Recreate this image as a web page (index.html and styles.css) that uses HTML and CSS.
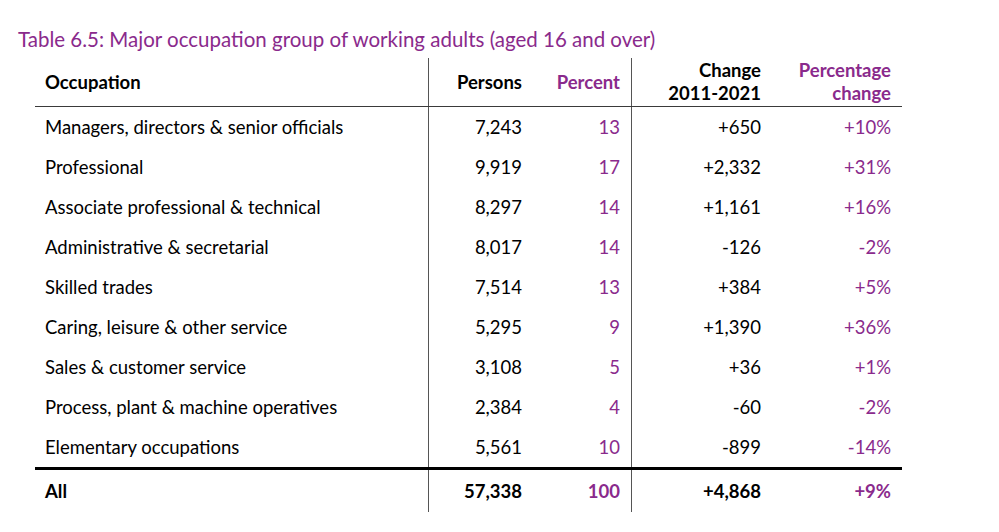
FILE: index.html
```html
<!DOCTYPE html>
<html lang="en">
<head>
<meta charset="utf-8">
<title>Table 6.5</title>
<link rel="stylesheet" href="styles.css">
</head>
<body>
<h1 class="title">Table 6.5: Major occupation group of working adults (aged 16 and over)</h1>
<table class="data">
  <thead>
    <tr>
      <th class="occ">Occupation</th>
      <th class="num persons">Persons</th>
      <th class="num pct purple">Percent</th>
      <th class="num chg">Change<br>2011-2021</th>
      <th class="num pchg purple">Percentage<br>change</th>
    </tr>
  </thead>
  <tbody>
    <tr><td class="occ">Managers, directors &amp; senior officials</td><td class="num persons">7,243</td><td class="num pct purple">13</td><td class="num chg">+650</td><td class="num pchg purple">+10%</td></tr>
    <tr><td class="occ">Professional</td><td class="num persons">9,919</td><td class="num pct purple">17</td><td class="num chg">+2,332</td><td class="num pchg purple">+31%</td></tr>
    <tr><td class="occ">Associate professional &amp; technical</td><td class="num persons">8,297</td><td class="num pct purple">14</td><td class="num chg">+1,161</td><td class="num pchg purple">+16%</td></tr>
    <tr><td class="occ">Administrative &amp; secretarial</td><td class="num persons">8,017</td><td class="num pct purple">14</td><td class="num chg">-126</td><td class="num pchg purple">-2%</td></tr>
    <tr><td class="occ">Skilled trades</td><td class="num persons">7,514</td><td class="num pct purple">13</td><td class="num chg">+384</td><td class="num pchg purple">+5%</td></tr>
    <tr><td class="occ">Caring, leisure &amp; other service</td><td class="num persons">5,295</td><td class="num pct purple">9</td><td class="num chg">+1,390</td><td class="num pchg purple">+36%</td></tr>
    <tr><td class="occ">Sales &amp; customer service</td><td class="num persons">3,108</td><td class="num pct purple">5</td><td class="num chg">+36</td><td class="num pchg purple">+1%</td></tr>
    <tr><td class="occ">Process, plant &amp; machine operatives</td><td class="num persons">2,384</td><td class="num pct purple">4</td><td class="num chg">-60</td><td class="num pchg purple">-2%</td></tr>
    <tr><td class="occ">Elementary occupations</td><td class="num persons">5,561</td><td class="num pct purple">10</td><td class="num chg">-899</td><td class="num pchg purple">-14%</td></tr>
  </tbody>
  <tfoot>
    <tr><td class="occ">All</td><td class="num persons">57,338</td><td class="num pct purple">100</td><td class="num chg">+4,868</td><td class="num pchg purple">+9%</td></tr>
  </tfoot>
</table>
</body>
</html>
```
FILE: styles.css
```css
html, body {
  margin: 0;
  padding: 0;
  background: #ffffff;
  color: #000000;
  font-family: Lato, "Open Sans", sans-serif;
}
body {
  padding: 26px 0 0 18px;
}
.title {
  margin: 0;
  font-size: 20.5px;
  font-weight: 400;
  line-height: 26px;
  color: #8a2a8c;
}
.data {
  margin: 6px 0 0 17px;
  border-collapse: collapse;
  font-size: 18.5px;
}
.data th, .data td {
  padding: 0;
  vertical-align: middle;
}
.data th {
  font-weight: 700;
  height: 48px;
  line-height: 23px;
  border-bottom: 1px solid #3a3a3a;
}
.data tbody td {
  height: 40px;
}
.data tbody tr:last-child td {
  border-bottom: 3px solid #000000;
}
.data tfoot td {
  height: 42px;
  font-weight: 700;
}
.occ {
  text-align: left;
  width: 383px;
  padding-left: 10px !important;
  border-right: 1px solid #555;
}
.num { text-align: right; }
.persons { width: 93px; padding-right: 8px !important; }
.pct { width: 90px; padding-right: 11px !important; border-right: 1px solid #555; }
.chg { width: 129px; padding-right: 10px !important; }
.pchg { width: 120px; padding-right: 11px !important; }
.purple { color: #8a2a8c; }
```
